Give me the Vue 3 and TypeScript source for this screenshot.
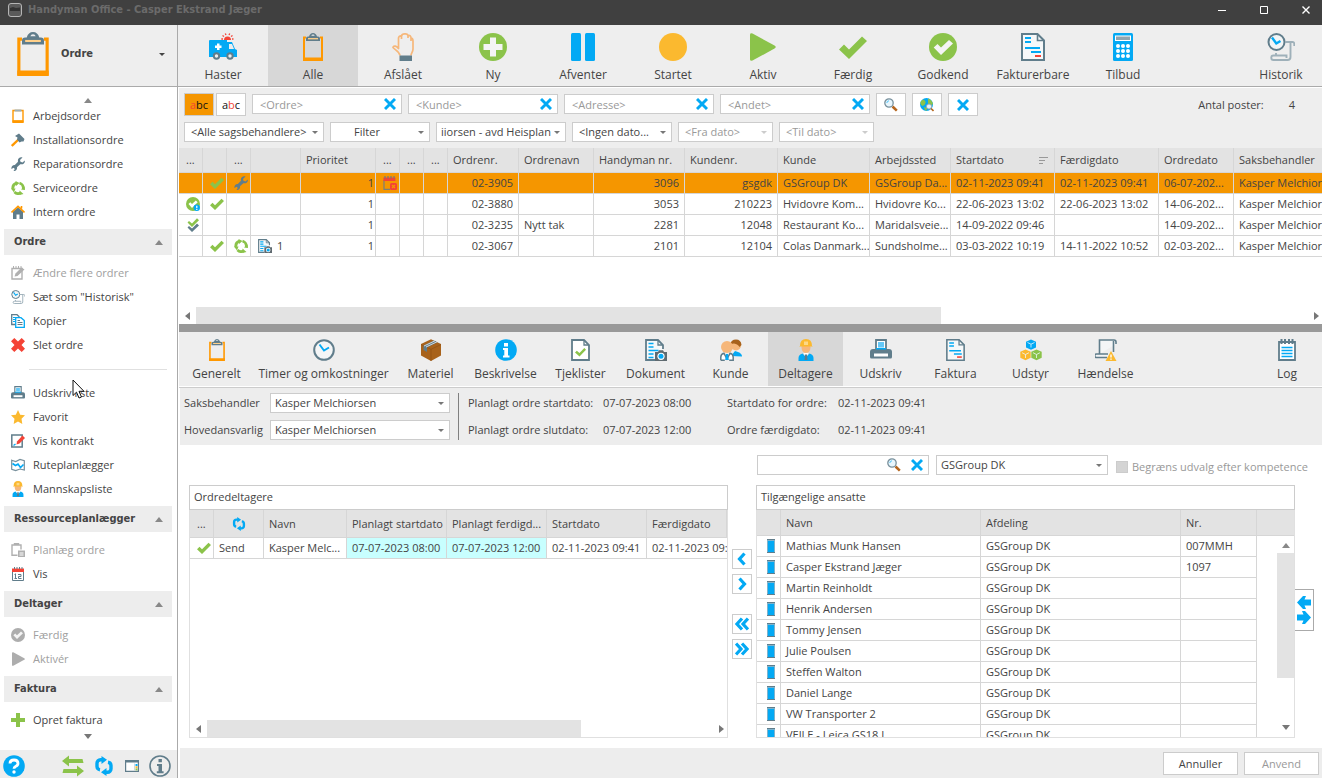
<script setup lang="ts">
import { ref } from 'vue'

interface Tool { label: string; icon: string; w: number; h: number; tone?: string }
interface Item { label: string; icon: string; w: number; h: number; off?: boolean; tone?: string }
interface Group { title: string; items: (Item | null)[] }
interface Order {
  state?: string; done?: boolean; kind?: string; docs?: string; cal?: boolean
  nr: string; name?: string; hm: string; kundenr: string; kunde: string; sted: string
  start: string; slut: string; dato: string
}

const active = ref('Alle')
const activeTab = ref('Deltagere')

const tools: Tool[] = [
  { label: 'Haster', icon: 'ambulance', w: 28, h: 28 },
  { label: 'Alle', icon: 'clipboard', w: 20, h: 28 },
  { label: 'Afslået', icon: 'hand', w: 22, h: 28 },
  { label: 'Ny', icon: 'plus-circle', w: 28, h: 28 },
  { label: 'Afventer', icon: 'pause', w: 24, h: 28 },
  { label: 'Startet', icon: 'dot', w: 28, h: 28 },
  { label: 'Aktiv', icon: 'play', w: 26, h: 28, tone: 'green' },
  { label: 'Færdig', icon: 'check', w: 28, h: 28, tone: 'green' },
  { label: 'Godkend', icon: 'check-circle', w: 28, h: 28, tone: 'green' },
  { label: 'Fakturerbare', icon: 'invoice', w: 24, h: 28 },
  { label: 'Tilbud', icon: 'calc', w: 20, h: 28 },
]

const tabs: Tool[] = [
  { label: 'Generelt', icon: 'clipboard', w: 16, h: 22 },
  { label: 'Timer og omkostninger', icon: 'clock', w: 22, h: 22 },
  { label: 'Materiel', icon: 'box', w: 22, h: 22 },
  { label: 'Beskrivelse', icon: 'info-fill', w: 22, h: 22 },
  { label: 'Tjeklister', icon: 'checklist', w: 19, h: 22 },
  { label: 'Dokument', icon: 'doc-camera', w: 22, h: 22 },
  { label: 'Kunde', icon: 'people', w: 22, h: 22 },
  { label: 'Deltagere', icon: 'worker', w: 16, h: 22 },
  { label: 'Udskriv', icon: 'printer', w: 22, h: 22 },
  { label: 'Faktura', icon: 'invoice', w: 19, h: 22 },
  { label: 'Udstyr', icon: 'cubes', w: 22, h: 22 },
  { label: 'Hændelse', icon: 'event', w: 22, h: 22 },
]

const shortcuts: Item[] = [
  { label: 'Arbejdsorder', icon: 'clipboard-small', w: 12, h: 14 },
  { label: 'Installationsordre', icon: 'hammer', w: 14, h: 14 },
  { label: 'Reparationsordre', icon: 'wrench', w: 14, h: 14 },
  { label: 'Serviceordre', icon: 'recycle', w: 14, h: 14 },
  { label: 'Intern ordre', icon: 'house', w: 14, h: 14 },
]

const groups: Group[] = [
  {
    title: 'Ordre',
    items: [
      { label: 'Ændre flere ordrer', icon: 'note', w: 14, h: 14, off: true },
      { label: 'Sæt som "Historisk"', icon: 'history', w: 14, h: 14 },
      { label: 'Kopier', icon: 'copy', w: 14, h: 14 },
      { label: 'Slet ordre', icon: 'cross', w: 14, h: 14, tone: 'red' },
      null,
      { label: 'Udskriv liste', icon: 'printer', w: 14, h: 14 },
      { label: 'Favorit', icon: 'star', w: 14, h: 14 },
      { label: 'Vis kontrakt', icon: 'contract', w: 14, h: 14 },
      { label: 'Ruteplanlægger', icon: 'map', w: 14, h: 14 },
      { label: 'Mannskapsliste', icon: 'worker', w: 12, h: 16 },
    ],
  },
  {
    title: 'Ressourceplanlægger',
    items: [
      { label: 'Planlæg ordre', icon: 'plan', w: 14, h: 14, off: true },
      { label: 'Vis', icon: 'calendar', w: 14, h: 14 },
    ],
  },
  {
    title: 'Deltager',
    items: [
      { label: 'Færdig', icon: 'check-circle', w: 14, h: 14, off: true, tone: 'gray' },
      { label: 'Aktivér', icon: 'play', w: 13, h: 14, off: true, tone: 'gray' },
    ],
  },
  { title: 'Faktura', items: [{ label: 'Opret faktura', icon: 'plus', w: 14, h: 14 }] },
]

const searches = ['Ordre', 'Kunde', 'Adresse', 'Andet']

const orders: Order[] = [
  { done: true, kind: 'wrench', cal: true, nr: '02-3905', hm: '3096', kundenr: 'gsgdk', kunde: 'GSGroup DK', sted: 'GSGroup Da...', start: '02-11-2023 09:41', slut: '02-11-2023 09:41', dato: '06-07-202...' },
  { state: 'badge', done: true, nr: '02-3880', hm: '3053', kundenr: '210223', kunde: 'Hvidovre Kom...', sted: 'Hvidovre Ko...', start: '22-06-2023 13:02', slut: '22-06-2023 13:02', dato: '14-06-202...' },
  { state: 'double', nr: '02-3235', name: 'Nytt tak', hm: '2281', kundenr: '12048', kunde: 'Restaurant Ko...', sted: 'Maridalsveie...', start: '14-09-2022 09:46', slut: '', dato: '14-09-202...' },
  { done: true, kind: 'recycle', docs: '1', nr: '02-3067', hm: '2101', kundenr: '12104', kunde: 'Colas Danmark...', sted: 'Sundsholme...', start: '03-03-2022 10:19', slut: '14-11-2022 10:52', dato: '02-03-202...' },
]

const staff = [
  { name: 'Mathias Munk Hansen', nr: '007MMH' },
  { name: 'Casper Ekstrand Jæger', nr: '1097' },
  { name: 'Martin Reinholdt', nr: '' },
  { name: 'Henrik Andersen', nr: '' },
  { name: 'Tommy Jensen', nr: '' },
  { name: 'Julie Poulsen', nr: '' },
  { name: 'Steffen Walton', nr: '' },
  { name: 'Daniel Lange', nr: '' },
  { name: 'VW Transporter 2', nr: '' },
  { name: 'VEJLE - Leica GS18 I', nr: '' },
]
</script>

<template>
  <div class="app">
    <svg class="sprite" aria-hidden="true">
      <symbol id="clipboard" viewBox="0 0 20 28">
        <path d="M3 4.500H1V27H19V4.500H17" fill="none" stroke="#ff9800" stroke-width="2" />
        <path d="M0 24.500h20V27a1 1 0 0 1-1 1H1a1 1 0 0 1-1-1z" fill="#ff9800" />
        <path d="M3 8V5.500Q3 3.500 5 3.500H6Q7 0 10 0T14 3.500H15Q17 3.500 17 5.500V8z" fill="#607d8b" />
        <path d="M8.300 2.700Q8.700 1.500 10 1.500T11.700 2.700z" fill="#eee" />
        <path d="M5 5.700h10" stroke="#ffd08a" stroke-width="1.300" />
      </symbol>
      <symbol id="clipboard-small" viewBox="0 0 12 14">
        <path d="M1 1.500h10V12H1z" fill="#fff" stroke="#ff9800" stroke-width="1.400" />
        <path d="M.300 11.500h11.400V14H.300z" fill="#ff9800" />
        <path d="M2.500 .500h7V2.500H2.500z" fill="#9db0ba" />
      </symbol>
      <symbol id="ambulance" viewBox="0 0 28 28">
        <path d="M0 8a1 1 0 0 1 1-1h17v2h5l3 7 2 1v7H0z" fill="#03a9f4" />
        <path d="M20 11h3l2 5h-5z" fill="#eee" />
        <path d="M8 10.500h2.500V12.500H12.500v2.500H10.500V17H8V15H6V12.500H8z" fill="#fff" />
        <circle cx="7.500" cy="23" r="2.700" fill="#eee" stroke="#607d8b" stroke-width="2" />
        <circle cx="21" cy="23" r="2.700" fill="#eee" stroke="#607d8b" stroke-width="2" />
        <path d="M15 7a3.500 3.500 0 0 1 7 0z" fill="#f44336" />
        <path d="M13.500 2.500l1.500 1M16.300 .500l.700 1.500M20.700 .500L20 2M23.500 2.500L22 3.500M12.300 6H14M23 6h1.500" stroke="#f44336" stroke-width="1.300" />
      </symbol>
      <symbol id="hand" viewBox="0 0 22 28">
        <path d="M8 22.500C7.500 18.500 3 17 1 14.500C1.500 12 5 13 6.500 15.500V5Q7 2.500 9.500 3Q10 .700 13 .900Q15.500 .700 16 2.500Q19 2 19 5Q21 5 21 8V16C21 19 19 20 19 22.500M9.500 3V6M16 2.500V5M19 5V8" fill="none" stroke="#f6b77a" stroke-width="1.700" stroke-linejoin="round" />
        <path d="M7.500 22.500h12.500V28H7.500z" fill="#607d8b" />
      </symbol>
      <symbol id="plus-circle" viewBox="0 0 28 28">
        <circle cx="14" cy="14" r="14" fill="#8bc34a" />
        <path d="M11 4.500h6V11h6.500v6H17v6.500H11V17H4.500V11H11z" fill="#f4f4f4" />
      </symbol>
      <symbol id="pause" viewBox="0 0 24 28">
        <rect width="10" height="28" rx="1.500" fill="#03a9f4" />
        <rect x="14" width="10" height="28" rx="1.500" fill="#03a9f4" />
      </symbol>
      <symbol id="dot" viewBox="0 0 28 28"><circle cx="14" cy="14" r="14" fill="#fbb92f" /></symbol>
      <symbol id="play" viewBox="0 0 26 28">
        <path d="M0 1.500Q0 0 2.500 .400L24.500 12.500Q27 14 24.500 15.500L2.500 27.600Q0 28 0 26.500z" fill="currentColor" />
      </symbol>
      <symbol id="check" viewBox="0 0 28 28">
        <path d="M0 16.500L5 11.500L10 16.500L23 3.500L28 8L10 26z" fill="currentColor" />
      </symbol>
      <symbol id="check-circle" viewBox="0 0 28 28">
        <circle cx="14" cy="14" r="14" fill="currentColor" />
        <path d="M4.700 14.500L8.500 11L12 14.500L20 7L24 10.500L12 22z" fill="#f4f4f4" />
      </symbol>
      <symbol id="invoice" viewBox="0 0 24 28">
        <path d="M1 1H16.500L23 7.500V27H1z" fill="#f6f8f9" stroke="#607d8b" stroke-width="2" />
        <path d="M16.500 1V7.500H23" fill="none" stroke="#607d8b" stroke-width="1.600" />
        <path d="M4 5h6M4 9h6M4 15h15M10 19h10" stroke="#03a9f4" stroke-width="2" />
        <path d="M14 23h6" stroke="#f44336" stroke-width="2" />
      </symbol>
      <symbol id="calc" viewBox="0 0 20 28">
        <rect width="20" height="28" rx="1.500" fill="#03a9f4" />
        <path d="M2 2.500h16v5.500H2z" fill="#fff" />
        <path d="M3 3.500h14V7H3z" fill="#90a4ae" />
        <g fill="#fff">
          <circle cx="5" cy="13" r="2" /><circle cx="10" cy="13" r="2" /><circle cx="15" cy="13" r="2" />
          <circle cx="5" cy="18" r="2" /><circle cx="10" cy="18" r="2" /><circle cx="15" cy="18" r="2" />
          <circle cx="5" cy="23" r="2" /><circle cx="10" cy="23" r="2" /><circle cx="15" cy="23" r="2" />
        </g>
      </symbol>
      <symbol id="history" viewBox="0 0 28 28">
        <path d="M18.500 9h7a1.800 1.800 0 0 1 1.800 1.800V13M23.500 9V24a3 3 0 0 1-3 3H6.500a2.200 2.200 0 0 1 0-4.500H19.500V25M9 20v2" fill="none" stroke="#9eb0b9" stroke-width="1.900" />
        <circle cx="9.500" cy="9" r="8" fill="#f2f5f6" stroke="#607d8b" stroke-width="2" />
        <path d="M5 4.500L9.300 10.500L13.500 8" fill="none" stroke="#03a9f4" stroke-width="2.400" />
      </symbol>
      <symbol id="cross" viewBox="0 0 14 14">
        <path d="M0 3.300L3.300 0L7 3.500L10.700 0L14 3.300L10.500 7L14 10.700L10.700 14L7 10.500L3.300 14L0 10.700L3.500 7z" fill="currentColor" />
      </symbol>
      <symbol id="clear" viewBox="0 0 12 12">
        <path d="M1 1L11 11M11 1L1 11" stroke="currentColor" stroke-width="2.900" />
      </symbol>
      <symbol id="search" viewBox="0 0 14 14">
        <path d="M8.500 8.500L12.800 12.600" stroke="#b5651d" stroke-width="2.600" />
        <circle cx="5" cy="5" r="4.200" fill="#e8f6fd" stroke="#78909c" stroke-width="1.300" />
        <path d="M2.800 5A2.300 2.300 0 0 1 5 2.800" fill="none" stroke="#4fc3f7" />
      </symbol>
      <symbol id="globe" viewBox="0 0 14 14">
        <circle cx="6.500" cy="6.500" r="6.500" fill="#03a9f4" />
        <path d="M3 1.500Q6 2.500 5.500 5T2.500 8Q.500 7 .300 5T3 1.500zM8 .500q4 1 5 5.500l-2 1.500L8 5.500zM4 9l3 1-.500 3Q4.500 12.500 4 9z" fill="#8bc34a" />
        <circle cx="9" cy="8.500" r="2.600" fill="#e3f2fd" stroke="#90a4ae" />
        <path d="M11 10.500L13.500 13" stroke="#b5651d" stroke-width="1.600" />
      </symbol>
      <symbol id="hammer" viewBox="0 0 14 14">
        <path d="M.800 13L7.500 6.500" stroke="#ff9800" stroke-width="2.400" />
        <path d="M4 3L8 .500L13.500 6L12.500 8.500L10.500 8.500L8.500 9.500L6 6.500L6.500 4.500z" fill="#607d8b" />
      </symbol>
      <symbol id="wrench" viewBox="0 0 14 14">
        <path d="M13.800 3.500L11.500 5.500L9.500 4.800L9 3L11.500 .500C8.500-.300 6.300 2 7 4.800L3.800 8C1.500 7.800 0 9.800.500 12L2.500 10.800L3.800 12L2.500 14C5 14.200 6.500 12.500 6 10.200L9.300 7.200C12 7.800 14.300 6.200 13.800 3.500z" fill="#607d8b" />
      </symbol>
      <symbol id="recycle" viewBox="0 0 14 14">
        <g fill="none" stroke="#8bc34a" stroke-width="2.800">
          <path d="M5.500 2.200A5.300 5.300 0 0 0 1.900 8" />
          <path d="M3.500 11A5.300 5.300 0 0 0 9.500 12" />
          <path d="M12.200 8.300A5.300 5.300 0 0 0 8.500 2" />
        </g>
        <path d="M4.500 0l4 2-3.500 3zM0 7.500h4.500L3 11.500zM8.500 9.500v4.500l4-1zM10 8.500l4 .500-.500-3.500z" fill="#8bc34a" />
      </symbol>
      <symbol id="house" viewBox="0 0 14 14">
        <path d="M2 6.500L7 2.500L12 6.500V14H8.500V9.500H5.500V14H2z" fill="#607d8b" />
        <path d="M.500 7.500L7 1.300L13.500 7.500M10.500 1v2.500" fill="none" stroke="#ff9800" stroke-width="1.600" />
      </symbol>
      <symbol id="note" viewBox="0 0 14 14">
        <path d="M1 2.500h10V13H1z" fill="none" stroke="#b0b0b0" stroke-width="1.400" />
        <path d="M2.500 0v3M5 0v3M7.500 0v3M10 0v2" stroke="#b0b0b0" />
        <path d="M3.500 10.500L4.500 7.500L10.500 1.500L13.500 3.500L6.500 10z" fill="#b0b0b0" />
      </symbol>
      <symbol id="copy" viewBox="0 0 14 14">
        <path d="M.700 .700H6L8 2.500V10.500H.700z" fill="#fff" stroke="#607d8b" stroke-width="1.300" />
        <path d="M2 3.500h2M2 5.500h2M2 7.500h2" stroke="#03a9f4" />
        <path d="M4.700 3.700H10L13.300 6.500V13.300H4.700z" fill="#fff" stroke="#03a9f4" stroke-width="1.300" />
        <path d="M6.500 6.500h2.500M6.500 8.500h5M6.500 10.500h5" stroke="#607d8b" />
      </symbol>
      <symbol id="printer" viewBox="0 0 22 22">
        <path d="M6 1h10V12H6z" fill="#fff" stroke="#607d8b" stroke-width="1.800" />
        <path d="M8 3h6v5.500H8z" fill="#64c8f8" />
        <path d="M3 10h16a3 3 0 0 1 3 3v5a1.500 1.500 0 0 1-1.500 1.500h-19A1.500 1.500 0 0 1 0 18v-5a3 3 0 0 1 3-3z" fill="#607d8b" />
        <path d="M4 14.500h14v3H4z" fill="#fff" />
        <path d="M6 9h10v1.500H6z" fill="#03a9f4" />
      </symbol>
      <symbol id="star" viewBox="0 0 14 14">
        <path d="M7 0L9.200 4.700L14 5.300L10.500 8.800L11.300 14L7 11.500L2.700 14L3.500 8.800L0 5.300L4.800 4.700z" fill="#fbb92f" />
      </symbol>
      <symbol id="contract" viewBox="0 0 14 14">
        <path d="M.800 1h10.400v12H.800z" fill="#fff" stroke="#607d8b" stroke-width="1.500" />
        <path d="M2.500 11.500l2-1.500" stroke="#03a9f4" stroke-width="1.300" />
        <path d="M5.500 10.500L6 7.500L11.500 1.500L14 4L8.500 9.500z" fill="#f44336" />
      </symbol>
      <symbol id="map" viewBox="0 0 14 14">
        <path d="M.700 2.200L4.700 3.500L9 1.500L13.300 2.800V12L9 11L4.700 12.500L.700 11.200z" fill="#fff" stroke="#78909c" stroke-width="1.200" />
        <path d="M1.500 5.500L4.500 7.500L7 6L9.500 9.500L12.500 6.500" fill="none" stroke="#03a9f4" stroke-width="1.600" />
      </symbol>
      <symbol id="worker" viewBox="0 0 16 22">
        <ellipse cx="8" cy="8.500" rx="4.500" ry="5.500" fill="#f6b77a" />
        <path d="M2 7Q2 0 8 0T14 7L15 7.500H1z" fill="#fbb92f" />
        <path d="M6 2.500h4v3.500H6z" fill="#fdd886" />
        <path d="M.500 22V19Q.500 15.500 4.500 14.500L8 18L11.500 14.500Q15.500 15.500 15.500 19V22z" fill="#03a9f4" />
        <path d="M5.500 14h5L8 19z" fill="#fff" />
        <path d="M7 15.500h2l.500 5.500h-3z" fill="#607d8b" />
      </symbol>
      <symbol id="plan" viewBox="0 0 14 14">
        <path d="M6.500 12.300H1V2H10V6.500M3.500 2V.700H7.500V2" fill="none" stroke="#b0b0b0" stroke-width="1.400" />
        <path d="M7 7.500h7V14H7z" fill="#b0b0b0" />
        <path d="M8.500 10h4M8.500 12h4" stroke="#fff" />
      </symbol>
      <symbol id="calendar" viewBox="0 0 14 14">
        <path d="M1.500 4h11v9.500h-11z" fill="#fff" stroke="#607d8b" />
        <path d="M1 1.500h12V5H1z" fill="#f44336" />
        <path d="M3.500 0v2M6 0v2M8.500 0v2M11 0v2" stroke="#607d8b" />
        <path d="M4.500 6.500v5M3.500 7.500h1M3.500 11.500h2.500M7 7.500h3v2H7.500v2H10.500" fill="none" stroke="#607d8b" />
      </symbol>
      <symbol id="calendar-x" viewBox="0 0 14 14">
        <path d="M1 4v9.400h6" fill="none" stroke="#7a7f7a" stroke-width="1.200" />
        <path d="M.400 1.500h12V5H.400z" fill="#f44336" />
        <path d="M2 0v2.500M5 0v2.500M8 0v2.500M11 0v2.500" stroke="#607d8b" stroke-width="1.100" />
        <rect x="7" y="7" width="7" height="7" rx="1.500" fill="#f44336" />
        <path d="M9 9l3 3M12 9l-3 3" stroke="#f59600" stroke-width="1.200" />
      </symbol>
      <symbol id="plus" viewBox="0 0 14 14"><path d="M5 0h4v5h5v4H9v5H5V9H0V5h5z" fill="#8bc34a" /></symbol>
      <symbol id="badge" viewBox="0 0 14 14">
        <circle cx="7" cy="7" r="7" fill="#8bc34a" />
        <path d="M2.500 7L4.300 5.300L6 7L9.800 3.500L11.700 5.300L6 11z" fill="#fff" />
        <circle cx="10.800" cy="10.800" r="3.200" fill="#03a9f4" />
        <path d="M10.800 8.700v2.600M10.800 12v1" stroke="#fff" stroke-width="1.200" />
      </symbol>
      <symbol id="double" viewBox="0 0 14 14">
        <path d="M1.500 9.500L3 8L6 10.500L11 5.500L13 7.500L6 14z" fill="#607d8b" />
        <path d="M1.500 4.500L3 3L6 5.500L11 .300L13 2.300L6 9z" fill="#8bc34a" />
      </symbol>
      <symbol id="clock" viewBox="0 0 22 22">
        <circle cx="11" cy="11" r="9.800" fill="#f4f6f7" stroke="#607d8b" stroke-width="2" />
        <path d="M6.500 5.500L11 11.500L16 8.500" fill="none" stroke="#03a9f4" stroke-width="1.900" />
      </symbol>
      <symbol id="box" viewBox="0 0 22 22">
        <path d="M11 .300L21 5V16.500L11 22L1 16.500V5z" fill="#a8621b" />
        <path d="M1 5.500L11 10.300L21 5.500M11 10V22" fill="none" stroke="#8a4d10" stroke-width=".600" />
        <path d="M3.500 6.500L14 1.500L17.500 3.200L7 8.500V13L3.500 11z" fill="#607d8b" />
        <path d="M4 7L15 1.800M6 8L17 2.800" stroke="#eee" stroke-width=".800" />
      </symbol>
      <symbol id="info-fill" viewBox="0 0 22 22">
        <circle cx="11" cy="11" r="10.800" fill="#03a9f4" />
        <path d="M9 4h4v3.400H9zM8 9h5v7.500h1.500V18.500H8V16.500H9.300V11H8z" fill="#fff" />
      </symbol>
      <symbol id="checklist" viewBox="0 0 19 22">
        <path d="M1 1H13L18 6V21H1z" fill="#fff" stroke="#607d8b" stroke-width="1.800" />
        <path d="M13 1V6H18" fill="none" stroke="#607d8b" stroke-width="1.300" />
        <path d="M4 13.500L5.800 11.700L8.500 14L13.300 9L15 10.800L8.500 17.500z" fill="#8bc34a" />
      </symbol>
      <symbol id="doc-camera" viewBox="0 0 22 22">
        <path d="M10 21H1V1H13L18 6V10" fill="#f6f8f9" stroke="#607d8b" stroke-width="1.800" />
        <path d="M13 1V6H18" fill="none" stroke="#607d8b" stroke-width="1.300" />
        <path d="M3.500 4.500h5M3.500 8h5M3.500 11.500h10M3.500 15h5M3.500 18.500h5" stroke="#03a9f4" stroke-width="1.700" />
        <path d="M10 13h3l1-1.700h4l1 1.700h3v9H10z" fill="#5f6a70" />
        <circle cx="16" cy="17.300" r="3.600" fill="#fff" /><circle cx="16" cy="17.300" r="2.500" fill="#03a9f4" />
      </symbol>
      <symbol id="people" viewBox="0 0 22 22">
        <circle cx="16" cy="6.500" r="5" fill="#f6b77a" />
        <path d="M10.500 5Q11 .500 16 .500T21.500 6L19.500 8Q18 5 14 4.500z" fill="#a8621b" />
        <path d="M11 17l4-5 3 1q4 1.500 4 4.500z" fill="#03a9f4" />
        <circle cx="7" cy="8" r="6" fill="#f6b77a" />
        <path d="M.800 21.300V18Q1 14.800 4 14.300L7 20l3-5.700q3 .500 3.200 3.700v3.300h-4M.800 21.300h4" fill="#fff" stroke="#607d8b" stroke-width="1.500" />
        <path d="M6 15h2l.800 6H5.200z" fill="#03a9f4" />
      </symbol>
      <symbol id="cubes" viewBox="0 0 22 22">
        <path d="M11 .500L16 2.700V8.500L11 10.800L6 8.500V2.700z" fill="#03a9f4" />
        <path d="M5.500 10.500L10.700 12.800V18.800L5.500 21.300L.300 18.800V12.800z" fill="#fbb92f" />
        <path d="M16.500 10.500L21.700 12.800V18.800L16.500 21.300L11.300 18.800V12.800z" fill="#8bc34a" />
        <path d="M7.500 3.500L11 5.200L14.500 3.500M11 5.200V8.500M2 13.700L5.500 15.500L9 13.700M5.500 15.500V19M13 13.700L16.500 15.500L20 13.700M16.500 15.500V19" fill="none" stroke="#eef6fa" stroke-width=".800" />
      </symbol>
      <symbol id="event" viewBox="0 0 22 22">
        <path d="M4.500 15V1H19a2 2 0 0 1 2 2v2M18.500 2V13M13 15H1.500a1.500 1.500 0 0 0 0 3.500H12" fill="#f3f5f6" stroke="#607d8b" stroke-width="1.600" />
        <path d="M16 12L21.500 22H10.500z" fill="#fbb92f" />
        <path d="M16 15.500v3M16 19.500v1.300" stroke="#fff" stroke-width="1.400" />
      </symbol>
      <symbol id="log" viewBox="0 0 18 22">
        <path d="M1 3h16V21H1z" fill="#fff" stroke="#607d8b" stroke-width="1.800" />
        <path d="M3.500 0v5M7 0v5M11 0v5M14.500 0v5" stroke="#607d8b" stroke-width="2" />
        <path d="M3.500 8.500h11M3.500 11.500h11M3.500 14.500h11M3.500 17.500h11" stroke="#03a9f4" stroke-width="1.500" />
      </symbol>
      <symbol id="phone" viewBox="0 0 8 14">
        <path d="M0 0h8v14H0z" fill="#607d8b" />
        <path d="M0 1h8v12H0z" fill="#7fb3cc" />
        <path d="M1 2h6v11H1z" fill="#03a9f4" />
      </symbol>
      <symbol id="help" viewBox="0 0 22 22">
        <circle cx="11" cy="11" r="10.800" fill="#03a9f4" />
        <path d="M7 8.500Q7 5 11 5t4 3.300Q15 10.500 12.500 11.500Q11 12.200 11 13.800" fill="none" stroke="#fff" stroke-width="2.800" />
        <circle cx="11" cy="17" r="1.700" fill="#fff" />
      </symbol>
      <symbol id="swap" viewBox="0 0 22 22">
        <path d="M0 6L7 .500V4H20.500L21.500 8H7V11.500zM22 16L15 10.500V14H1.500L.500 18H15V21.500z" fill="#8bc34a" />
      </symbol>
      <symbol id="sync" viewBox="0 0 20 20">
        <path d="M9 3.800H6.500A3.500 3.500 0 0 0 3 7.300V10.500A3.500 3.500 0 0 0 6 13.800M11 16.200H13.500A3.500 3.500 0 0 0 17 12.700V9.500A3.500 3.500 0 0 0 14 6.200" fill="none" stroke="#03a9f4" stroke-width="3.400" />
        <path d="M7.500 0L13 3.800L7.500 8zM12.500 12L7 16.200L12.500 20z" fill="#03a9f4" />
      </symbol>
      <symbol id="window" viewBox="0 0 14 12">
        <path d="M.600 .600h12.800v10.800H.600z" fill="#fff" stroke="#607d8b" stroke-width="1.200" />
        <path d="M0 0h14v2.500H0z" fill="#607d8b" />
        <path d="M9.500 3.500v7.500" stroke="#cfd8dc" />
        <path d="M10.500 4h2v2h-2z" fill="#03a9f4" /><path d="M10.500 6.200h2v2h-2z" fill="#fbb92f" /><path d="M10.500 8.400h2v2h-2z" fill="#8bc34a" />
      </symbol>
      <symbol id="info" viewBox="0 0 22 22">
        <circle cx="11" cy="11" r="10" fill="#eee" stroke="#607d8b" stroke-width="1.600" />
        <path d="M9.500 4h3.400v3.200H9.500zM8 9h5v7.300h1.600V18.300H7.800V16.300H9.500V11H8z" fill="#607d8b" />
      </symbol>
      <symbol id="chev" viewBox="0 0 14 14"><path d="M9.500 1.500L4.500 7L9.500 12.500" fill="none" stroke="#03a9f4" stroke-width="3.200" /></symbol>
      <symbol id="chev2" viewBox="0 0 14 14"><path d="M7 1.500L2 7L7 12.500M13 1.500L8 7L13 12.500" fill="none" stroke="#03a9f4" stroke-width="3.200" /></symbol>
      <symbol id="arrow" viewBox="0 0 14 13"><path d="M0 6.500L6 0H9L7.500 3.500H14V9.500H7.500L9 13H6z" fill="#03a9f4" /></symbol>
    </svg>

    <header class="titlebar">
      <svg class="logo" width="14" height="14" viewBox="0 0 14 14" aria-hidden="true">
        <rect x=".500" y=".500" width="13" height="13" rx="2.500" fill="#5a5a5a" stroke="#b5b5b5" />
        <path d="M2 5l3-1 3 1 4-.500V8H2z" fill="#333" />
      </svg>
      <h1>Handyman Office - Casper Ekstrand Jæger</h1>
      <div class="wincontrols">
        <button type="button" aria-label="Minimer"><svg width="8" height="8" viewBox="0 0 8 8"><path d="M0 4.500h8" stroke="#fff" /></svg></button>
        <button type="button" aria-label="Maksimer"><svg width="8" height="8" viewBox="0 0 8 8"><path d="M.500 .500h7v7h-7z" fill="none" stroke="#fff" /></svg></button>
        <button type="button" aria-label="Luk"><svg width="8" height="8" viewBox="0 0 8 8"><path d="M.500 .500l7 7M7.500 .500l-7 7" stroke="#fff" stroke-width="1.400" /></svg></button>
      </div>
    </header>

    <div class="shell">
      <aside class="side">
        <button type="button" class="module">
          <svg width="32" height="44"><use href="#clipboard" /></svg>
          <span>Ordre</span>
          <i class="caret dark"></i>
        </button>
        <nav class="sidebody">
          <button type="button" class="scroll up" aria-label="Rul op"><i class="tri up"></i></button>
          <button v-for="s in shortcuts" :key="s.label" type="button" class="item">
            <span class="slot"><svg :width="s.w" :height="s.h"><use :href="'#' + s.icon" /></svg></span>{{ s.label }}
          </button>
          <section v-for="g in groups" :key="g.title" class="group">
            <h2><button type="button">{{ g.title }}<i class="tri up"></i></button></h2>
            <template v-for="(it, i) in g.items" :key="i">
              <button v-if="it" type="button" class="item" :disabled="it.off">
                <span class="slot" :class="it.tone"><svg :width="it.w" :height="it.h"><use :href="'#' + it.icon" /></svg></span>{{ it.label }}
              </button>
              <hr v-else />
            </template>
          </section>
          <button type="button" class="scroll" aria-label="Rul ned"><i class="tri down"></i></button>
        </nav>
        <footer class="sidefoot">
          <button type="button" aria-label="Hjælp" class="first"><svg width="22" height="22"><use href="#help" /></svg></button>
          <button type="button" aria-label="Overfør"><svg width="22" height="22"><use href="#swap" /></svg></button>
          <button type="button" aria-label="Synkroniser"><svg width="20" height="20"><use href="#sync" /></svg></button>
          <button type="button" aria-label="Vindue"><svg width="14" height="12"><use href="#window" /></svg></button>
          <button type="button" aria-label="Info"><svg width="22" height="22"><use href="#info" /></svg></button>
        </footer>
      </aside>

      <main class="main">
        <nav class="toolbar">
          <button v-for="t in tools" :key="t.label" type="button" :class="{ on: active === t.label }" @click="active = t.label">
            <svg :class="t.tone" :width="t.w" :height="t.h"><use :href="'#' + t.icon" /></svg>
            <span>{{ t.label }}</span>
          </button>
          <button type="button" class="last">
            <svg width="28" height="28"><use href="#history" /></svg>
            <span>Historik</span>
          </button>
        </nav>

        <section class="filters">
          <div class="frow">
            <div class="pair">
              <button type="button" class="sq hot" aria-label="Starter med abc"><span><em>a</em>bc</span></button>
              <button type="button" class="sq" aria-label="Indeholder abc"><span>a<em>b</em>c</span></button>
            </div>
            <div v-for="s in searches" :key="s" class="search">
              <input type="text" :placeholder="'<' + s + '>'" :aria-label="s" />
              <button type="button" :aria-label="'Ryd ' + s"><svg class="blue" width="12" height="12"><use href="#clear" /></svg></button>
            </div>
            <button type="button" class="sq" aria-label="Søg"><svg width="14" height="14"><use href="#search" /></svg></button>
            <button type="button" class="sq" aria-label="Kort"><svg width="14" height="14"><use href="#globe" /></svg></button>
            <button type="button" class="sq" aria-label="Ryd alle"><svg class="blue" width="12" height="12"><use href="#clear" /></svg></button>
            <p class="count"><span>Antal poster:</span><span>4</span></p>
          </div>
          <div class="frow">
            <label class="sel w140"><select aria-label="Sagsbehandler"><option>&lt;Alle sagsbehandlere&gt;</option></select><i class="caret"></i></label>
            <label class="sel w100 mid"><select aria-label="Filter"><option>Filter</option></select><i class="caret"></i></label>
            <label class="sel w130 tight"><select aria-label="Afdeling"><option>iiorsen - avd Heisplan</option></select><i class="caret"></i></label>
            <label class="sel w100"><select aria-label="Datotype"><option>&lt;Ingen dato...</option></select><i class="caret"></i></label>
            <label class="sel w95"><select aria-label="Fra dato" disabled><option>&lt;Fra dato&gt;</option></select><i class="caret"></i></label>
            <label class="sel w95"><select aria-label="Til dato" disabled><option>&lt;Til dato&gt;</option></select><i class="caret"></i></label>
          </div>
        </section>

        <section class="orders">
          <table>
            <colgroup>
              <col class="c24" /><col class="c24" /><col class="c24" /><col class="c50" /><col class="c75" />
              <col class="c24" /><col class="c24" /><col class="c24" /><col class="c71" /><col class="c75" />
              <col class="c91" /><col class="c93" /><col class="c92" /><col class="c81" /><col class="c104" />
              <col class="c104" /><col class="c75" /><col />
            </colgroup>
            <thead>
              <tr>
                <th class="dots">...</th><th></th><th class="dots">...</th><th></th><th>Prioritet</th>
                <th class="dots">...</th><th class="dots">...</th><th class="dots">...</th>
                <th>Ordrenr.</th><th>Ordrenavn</th><th>Handyman nr.</th><th>Kundenr.</th><th>Kunde</th><th>Arbejdssted</th>
                <th><div class="sorted">Startdato<svg width="9" height="7" viewBox="0 0 9 7"><path d="M0 .500h9M0 3.500h6M0 6.500h4" stroke="#999" /></svg></div></th>
                <th>Færdigdato</th><th>Ordredato</th><th>Saksbehandler</th>
              </tr>
            </thead>
            <tbody>
              <tr v-for="(o, i) in orders" :key="o.nr" :class="{ picked: i === 0 }">
                <td class="ico"><svg v-if="o.state" width="14" height="14"><use :href="'#' + o.state" /></svg></td>
                <td class="ico"><svg v-if="o.done" class="green" width="14" height="14"><use href="#check" /></svg></td>
                <td class="ico"><svg v-if="o.kind" width="14" height="14"><use :href="'#' + o.kind" /></svg></td>
                <td><div v-if="o.docs" class="docs"><svg width="14" height="14"><use href="#doc-camera" /></svg>{{ o.docs }}</div></td>
                <td class="num flush">1</td>
                <td class="ico"><svg v-if="o.cal" width="14" height="14"><use href="#calendar-x" /></svg></td>
                <td></td><td></td>
                <td class="num">{{ o.nr }}</td>
                <td>{{ o.name }}</td>
                <td class="num">{{ o.hm }}</td>
                <td class="num">{{ o.kundenr }}</td>
                <td>{{ o.kunde }}</td>
                <td>{{ o.sted }}</td>
                <td>{{ o.start }}</td>
                <td>{{ o.slut }}</td>
                <td>{{ o.dato }}</td>
                <td>Kasper Melchiorsen</td>
              </tr>
            </tbody>
          </table>
          <div class="hbar"><i class="tri left"></i><span class="track"><b class="wide"></b></span><i class="tri right"></i></div>
        </section>

        <div class="splitter"></div>

        <nav class="toolbar tabs">
          <button v-for="t in tabs" :key="t.label" type="button" :class="{ on: activeTab === t.label, long: t.icon === 'clock' }" @click="activeTab = t.label">
            <svg :width="t.w" :height="t.h"><use :href="'#' + t.icon" /></svg>
            <span>{{ t.label }}</span>
          </button>
          <button type="button" class="last">
            <svg width="18" height="22"><use href="#log" /></svg>
            <span>Log</span>
          </button>
        </nav>

        <section class="detail">
          <div class="who">
            <label for="saks">Saksbehandler</label>
            <span class="sel"><select id="saks"><option>Kasper Melchiorsen</option></select><i class="caret"></i></span>
            <label for="hoved">Hovedansvarlig</label>
            <span class="sel"><select id="hoved"><option>Kasper Melchiorsen</option></select><i class="caret"></i></span>
          </div>
          <div class="dates">
            <span>Planlagt ordre startdato:</span><span>07-07-2023 08:00</span><span>Startdato for ordre:</span><span>02-11-2023 09:41</span>
            <span>Planlagt ordre slutdato:</span><span>07-07-2023 12:00</span><span>Ordre færdigdato:</span><span>02-11-2023 09:41</span>
          </div>
        </section>

        <section class="work">
          <div class="pick">
            <div class="search big">
              <input type="text" aria-label="Søg ansatte" />
              <button type="button" aria-label="Søg"><svg width="14" height="14"><use href="#search" /></svg></button>
              <button type="button" aria-label="Ryd"><svg class="blue" width="12" height="12"><use href="#clear" /></svg></button>
            </div>
            <label class="sel w172"><select aria-label="Afdeling"><option>GSGroup DK</option></select><i class="caret"></i></label>
            <label class="limit"><input type="checkbox" disabled />Begræns udvalg efter kompetence</label>
          </div>

          <div class="panel left">
            <h3>Ordredeltagere</h3>
            <div class="body">
              <table class="tall">
                <colgroup><col class="c24" /><col class="c50" /><col class="c83" /><col class="c100" /><col class="c100" /><col class="c100" /><col /></colgroup>
                <thead>
                  <tr>
                    <th class="dots">...</th><th class="ico"><svg width="14" height="14"><use href="#sync" /></svg></th><th>Navn</th>
                    <th>Planlagt startdato</th><th>Planlagt ferdigd...</th><th>Startdato</th><th>Færdigdato</th>
                  </tr>
                </thead>
                <tbody>
                  <tr>
                    <td class="ico"><svg class="green" width="14" height="14"><use href="#check" /></svg></td>
                    <td>Send</td><td>Kasper Melc...</td>
                    <td class="aqua">07-07-2023 08:00</td><td class="aqua">07-07-2023 12:00</td>
                    <td>02-11-2023 09:41</td><td class="edge">02-11-2023 09:41</td>
                  </tr>
                </tbody>
              </table>
              <div class="hbar"><i class="tri left"></i><span class="track"><b class="part"></b></span><i class="tri right"></i></div>
            </div>
          </div>

          <div class="movers">
            <button type="button" aria-label="Tilføj"><svg width="14" height="14"><use href="#chev" /></svg></button>
            <button type="button" aria-label="Fjern"><svg class="flip" width="14" height="14"><use href="#chev" /></svg></button>
            <button type="button" aria-label="Tilføj alle" class="apart"><svg width="14" height="14"><use href="#chev2" /></svg></button>
            <button type="button" aria-label="Fjern alle"><svg class="flip" width="14" height="14"><use href="#chev2" /></svg></button>
          </div>

          <div class="panel right">
            <h3>Tilgængelige ansatte</h3>
            <div class="body">
              <table>
                <colgroup><col class="c24" /><col class="c200" /><col class="c200" /><col class="c76" /><col /></colgroup>
                <thead><tr><th></th><th>Navn</th><th>Afdeling</th><th>Nr.</th><th></th></tr></thead>
                <tbody>
                  <tr v-for="p in staff" :key="p.name">
                    <td class="ico"><svg width="8" height="14"><use href="#phone" /></svg></td>
                    <td>{{ p.name }}</td><td>GSGroup DK</td><td>{{ p.nr }}</td><td class="void"></td>
                  </tr>
                </tbody>
              </table>
              <div class="vbar"><i class="tri up"></i><span><b></b></span><i class="tri down"></i></div>
            </div>
          </div>

          <button type="button" class="flap" aria-label="Skift visning">
            <svg width="14" height="13"><use href="#arrow" /></svg>
            <svg class="flip" width="14" height="13"><use href="#arrow" /></svg>
          </button>
        </section>

        <footer class="actions">
          <button type="button">Annuller</button>
          <button type="button" disabled>Anvend</button>
        </footer>
      </main>
    </div>

    <svg class="pointer" width="13" height="20" viewBox="0 0 13 20" aria-hidden="true">
      <path d="M1 1V16.500L4.500 13.200L7 19L9.500 18L7 12.300H12z" fill="#fff" stroke="#111" />
    </svg>
  </div>
</template>

<style>
body { background: #fff; }
</style>

<style scoped>
* { box-sizing: border-box; }
.app {
  display: flex; flex-direction: column; height: 100vh; min-height: 700px; overflow: hidden;
  font: 11px/14px Tahoma, "Open Sans", "Noto Sans", sans-serif; color: #444; background: #fff; position: relative;
}
.sprite { position: absolute; width: 0; height: 0; }
svg { display: block; flex: none; }
button, input, select { font: inherit; color: inherit; margin: 0; padding: 0; border: 0; background: none; border-radius: 0; }
h1, h2, h3, p { margin: 0; font: inherit; }
.green { color: #8bc34a; }
.gray { color: #adadad; }
.red { color: #f44336; }
.blue { color: #03a9f4; }
.flip { transform: rotate(180deg); }

.titlebar { display: flex; align-items: center; height: 25px; flex: none; padding: 0 12px 5px 8px; background: #404040; }
.titlebar h1 { margin-left: 6px; font-family: Tahoma, "DejaVu Sans Condensed", "Open Sans", sans-serif; font-weight: 700; color: #6b6b6b; }
.wincontrols { display: flex; gap: 34px; margin-left: auto; }

.shell { display: flex; flex: 1; min-height: 0; }
.side { display: flex; flex-direction: column; width: 178px; flex: none; border-right: 1px solid #aaa; }
.module { display: flex; align-items: center; height: 62px; flex: none; padding: 0 12px 3px 17px; background: #eee; border-bottom: 1px solid #aaa; font-family: Tahoma, "DejaVu Sans Condensed", "Open Sans", sans-serif; font-weight: 700; text-align: left; }
.module span { flex: 1; margin-left: 12px; }
.sidebody { flex: 1; min-height: 0; overflow: hidden; padding: 9px 5px 0 4px; }
.scroll { display: flex; align-items: center; justify-content: center; width: 100%; height: 8px; }
.item { display: flex; align-items: center; width: 100%; height: 24px; text-align: left; white-space: nowrap; }
.item:disabled { color: #a0a0a0; }
.slot { display: flex; justify-content: center; width: 14px; margin: 0 8px 0 7px; }
.group { margin-top: 5px; }
.group h2 { margin-bottom: 6px; }
.group h2 button { display: flex; align-items: center; justify-content: space-between; width: 100%; height: 26px; padding: 0 9px 0 10px; background: #ededed; font-family: Tahoma, "DejaVu Sans Condensed", "Open Sans", sans-serif; font-weight: 700; }
hr { height: 1px; margin: 12px 5px 11px 25px; border: 0; background: #e0e0e0; }
.sidefoot { display: flex; align-items: center; justify-content: space-between; height: 28px; flex: none; padding: 3px 6px 0 3px; background: #ededed; }
.sidefoot .first { margin-right: 26px; }

.tri, .caret { display: block; width: 0; height: 0; flex: none; }
.tri.up { border: solid transparent; border-width: 0 4px 5px; border-bottom-color: #888; }
.tri.down { border: solid transparent; border-width: 5px 4px 0; border-top-color: #777; }
.tri.left { border: solid transparent; border-width: 4px 5px 4px 0; border-right-color: #777; }
.tri.right { border: solid transparent; border-width: 4px 0 4px 5px; border-left-color: #777; }
.caret { border: solid transparent; border-width: 3px 3px 0; border-top-color: #777; }
.caret.dark { border-top-color: #444; }

.main { display: flex; flex: 1; flex-direction: column; min-width: 0; }
.toolbar { display: flex; height: 62px; flex: none; background: #eee; border-bottom: 1px solid #aaa; font: 12px/18px "Segoe UI", "Open Sans", "Noto Sans", sans-serif; }
.toolbar button { display: flex; flex-direction: column; align-items: center; width: 90px; padding-top: 8px; gap: 5px; white-space: nowrap; }
.toolbar .on { background: #d7d7d7; }
.toolbar .last { width: 82px; margin-left: auto; }
.toolbar.tabs { height: 56px; margin-left: 1px; padding-bottom: 1px; border-color: #ccc; background: linear-gradient(#eee 54px, #fff 54px); }
.tabs button { width: 75px; padding-top: 7px; gap: 4px; }
.tabs .long { width: 139px; }
.tabs .last { width: 70px; }

.filters { flex: none; margin: 1px 0 0 1px; padding: 5px 5px 6px; background: #eee; }
.frow { display: flex; align-items: flex-start; gap: 6px; }
.frow + .frow { margin-top: 6px; }
.frow .search { margin-top: 1px; }
.pair { display: flex; gap: 2px; }
.sq { display: flex; align-items: center; justify-content: center; width: 30px; height: 23px; flex: none; border: 1px solid #ccc; background: #fff; color: #111; }
.sq em { font-style: normal; color: #f44336; }
.sq.hot { background: #f59600; }
.search { display: flex; align-items: center; width: 150px; height: 20px; border: 1px solid #ccc; background: #fff; padding-right: 5px; gap: 8px; }
.search input { flex: 1; min-width: 0; height: 100%; padding: 0 7px; outline: 0; }
.search input::placeholder { color: #999; opacity: 1; }
.count { display: flex; gap: 25px; margin: 5px 22px 0 auto; }
.sel { position: relative; display: block; flex: none; height: 20px; border: 1px solid #ccc; background: #fff; }
.sel select { display: block; width: 100%; height: 100%; padding: 0 12px 0 6px; appearance: none; outline: 0; overflow: hidden; }
.sel select:disabled { color: #999; opacity: 1; }
.sel select:disabled + .caret { border-top-color: #ccc; }
.sel .caret { position: absolute; right: 5px; top: 8px; pointer-events: none; }
.sel.mid select { text-align: center; text-align-last: center; padding-right: 32px; }
.sel.tight select { padding-left: 4px; }
.w140 { width: 140px; } .w130 { width: 130px; } .w100 { width: 100px; } .w95 { width: 95px; } .w172 { width: 172px; }

table { width: 100%; table-layout: fixed; border-collapse: separate; border-spacing: 0; }
th, td { padding: 0 1px 0 5px; border: solid #d6d6d6; border-width: 0 1px 1px 0; text-align: left; font-weight: 400; white-space: nowrap; overflow: hidden; }
th { height: 25px; background: #e3e3e3; }
td { height: 21px; }
th.ico { padding: 0; }
td.ico { padding: 0 0 0 4px; }
th.dots { padding-left: 7px; }
.ico svg { margin: 0 auto; }
td.num { text-align: right; padding-right: 5px; }
td.flush { padding-right: 1px; }
.picked td { background: #f59600; }
.aqua { background: #c8ffff; }
.sorted { display: flex; align-items: center; justify-content: space-between; padding-right: 5px; }
.docs { display: flex; align-items: center; gap: 5px; padding-left: 2px; }
.c24 { width: 24px; } .c50 { width: 50px; } .c71 { width: 71px; } .c75 { width: 75px; } .c76 { width: 76px; } .c81 { width: 81px; }
.c83 { width: 83px; } .c91 { width: 91px; } .c92 { width: 92px; } .c93 { width: 93px; } .c100 { width: 100px; } .c104 { width: 104px; } .c200 { width: 200px; }

.orders { display: flex; flex-direction: column; justify-content: space-between; height: 176px; flex: none; margin-left: 1px; overflow: hidden; }
.orders th:last-child, .orders td:last-child, td.edge { border-right: 0; padding-right: 0; }
.hbar { display: flex; align-items: center; height: 17px; flex: none; padding: 0 3px 0 6px; }
.track { display: flex; flex: 1; height: 100%; margin: 0 6px; }
.track b { background: #e3e3e3; }
.wide { width: 67%; }
.part { width: 74%; }
.splitter { height: 8px; flex: none; margin-left: 1px; background: #999; }

.detail { display: flex; flex: none; margin-left: 2px; padding: 5px 4px 5px; background: #ededed; }
.who { display: grid; grid-template-columns: 86px 180px; gap: 7px 0; align-items: center; padding-right: 8px; border-right: 1px solid #808080; }
.who .sel select { padding-left: 4px; }
.dates { display: grid; grid-template-columns: 135px 124px 111px auto; gap: 7px 0; align-items: center; padding-left: 9px; }

.work { display: grid; grid-template-columns: minmax(0, 1fr) 20px minmax(0, 1fr) 20px; grid-template-rows: 20px minmax(0, 1fr); column-gap: 4px; row-gap: 10px; flex: 1; min-height: 0; padding: 10px 3px 10px 11px; }
.pick { grid-column: 3 / 5; display: flex; gap: 7px; padding-left: 1px; }
.search.big { width: 172px; flex: none; gap: 10px; }
.pick .sel select { padding-left: 4px; }
.limit { display: flex; align-items: center; gap: 4px; margin: 3px 0 0 1px; color: #999; white-space: nowrap; }
.limit input { appearance: none; width: 12px; height: 12px; background: #d4d4d4; border: 1px solid #ccc; }
.panel { display: flex; flex-direction: column; min-height: 0; }
.panel.left { grid-column: 1; }
.panel h3 { height: 25px; flex: none; padding: 4px 4px; border: 1px solid #ccc; }
.body { position: relative; display: flex; flex: 1; flex-direction: column; justify-content: space-between; min-height: 0; overflow: hidden; border: solid #e0e0e0; border-width: 0 1px 1px; }
.tall th { height: 28px; }
.right .body { justify-content: flex-start; }
.right th { height: 26px; }
.right th:last-child, .right .void { border-right: 0; }
.right .void { border-bottom: 0; }
.vbar { position: absolute; top: 26px; right: 0; bottom: 0; width: 17px; display: flex; flex-direction: column; align-items: center; padding: 7px 0; background: #fff; }
.vbar span { display: flex; flex: 1; width: 100%; margin: 5px 0; }
.vbar b { width: 100%; height: 75%; background: #e3e3e3; }
.movers { display: flex; flex-direction: column; gap: 5px; padding-top: 64px; }
.movers button { display: flex; align-items: center; justify-content: center; height: 20px; border: 1px solid #ccc; background: #fff; }
.movers .apart { margin-top: 15px; }
.flap { display: flex; flex-direction: column; align-items: center; justify-content: center; gap: 2px; height: 42px; margin: 104px 0 0 -5px; width: 20px; border: 1px solid #aaa; border-left: 0; }

.actions { display: flex; justify-content: flex-end; gap: 6px; flex: none; margin-left: 2px; padding: 4px 3px 3px; background: #ededed; }
.actions button { width: 75px; height: 23px; border: 1px solid #ccc; background: #fff; }
.actions button:disabled { color: #999; }
.pointer { position: absolute; left: 72px; top: 379px; }
</style>
